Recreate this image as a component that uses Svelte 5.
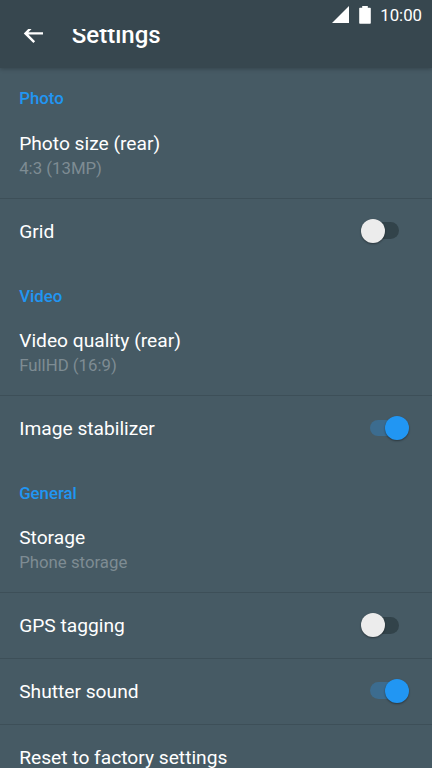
<script>
  let sections = $state([
    { name: 'Photo', rows: [
      { title: 'Photo size (rear)', detail: '4:3 (13MP)' },
      { title: 'Grid', on: false }
    ] },
    { name: 'Video', rows: [
      { title: 'Video quality (rear)', detail: 'FullHD (16:9)' },
      { title: 'Image stabilizer', on: true }
    ] },
    { name: 'General', rows: [
      { title: 'Storage', detail: 'Phone storage' },
      { title: 'GPS tagging', on: false },
      { title: 'Shutter sound', on: true },
      { title: 'Reset to factory settings' }
    ] }
  ]);
</script>

<div class="screen">
  <header>
    <div class="status">
      <svg width="17" height="17" viewBox="0 0 17 17"><path d="M0 17 17 0V17Z" /></svg>
      <svg class="battery" width="12" height="18" viewBox="0 0 12 18"><path d="M3.2 0h5.6v1.8h2.3q.7 0 .7.7v14.6q0 .7-.7.7H.9q-.7 0-.7-.7V2.5q0-.7.7-.7h2.3Z" /></svg>
      <span>10:00</span>
    </div>
    <div class="bar">
      <svg class="back" width="28.8" height="28.8" viewBox="0 0 24 24"><path d="M20 11H7.83l5.59-5.59L12 4l-8 8 8 8 1.41-1.41L7.83 13H20v-2z" /></svg>
      <h1>Settings</h1>
    </div>
  </header>
  <main>
    {#each sections as section}
      <section>
        <h2>{section.name}</h2>
        {#each section.rows as row}
          <div class="row" class:double={row.detail}>
            <div class="label">
              <div class="title">{row.title}</div>
              {#if row.detail}<div class="detail">{row.detail}</div>{/if}
            </div>
            {#if row.on !== undefined}
              <button class="switch" class:on={row.on} role="switch" aria-checked={row.on} aria-label={row.title} onclick={() => (row.on = !row.on)}>
                <span class="thumb"></span>
              </button>
            {/if}
          </div>
        {/each}
      </section>
    {/each}
  </main>
</div>

<style>
  .screen {
    height: 768px;
    overflow: hidden;
    display: flex;
    flex-direction: column;
    background: #465a64;
    color: #fff;
    font-family: Roboto, sans-serif;
  }
  header {
    position: relative;
    z-index: 1;
    flex: none;
    height: 68px;
    background: #37474f;
    box-shadow: 0 1px 4px rgba(0, 0, 0, 0.25);
  }
  svg { fill: #fff; flex: none; }
  .status {
    height: 29px;
    display: flex;
    align-items: center;
    justify-content: flex-end;
    box-sizing: border-box;
    padding: 0 10px 0 0;
    font-size: 16.8px;
  }
  .battery { margin: 0 9.5px 0 9.5px; }
  .bar {
    height: 39px;
    overflow: hidden;
    display: flex;
    align-items: flex-start;
    padding-left: 19px;
  }
  .back { margin-top: -9.8px; }
  h1 {
    margin: -8px 0 0 24px;
    font-size: 24px;
    line-height: 28px;
    font-weight: 500;
  }
  section { padding-bottom: 1.6px; }
  h2 {
    box-sizing: border-box;
    height: 43.6px;
    margin: 0;
    padding: 20.4px 19.2px 0;
    font-size: 16.8px;
    line-height: 20px;
    font-weight: 500;
    color: #2196f3;
  }
  .row {
    box-sizing: border-box;
    height: 65.6px;
    padding: 0 23px 0 19.2px;
    display: flex;
    align-items: center;
    justify-content: space-between;
  }
  .row + .row { border-top: 1px solid #3d4f58; }
  .label { padding-top: 1.4px; }
  .double .label { padding-top: 2.4px; }
  .double { height: 86.4px; }
  .title { font-size: 19.2px; line-height: 24px; }
  .detail { font-size: 16.8px; line-height: 24px; color: #7e8c93; }
  .switch {
    width: 48px;
    height: 24px;
    margin: 0 0 1px;
    padding: 0;
    border: 0;
    background: none;
    display: flex;
    align-items: center;
  }
  .switch::before {
    content: '';
    flex: none;
    width: 28.8px;
    height: 16.8px;
    margin-left: 9.6px;
    border-radius: 8.4px;
    background: #32434a;
  }
  .thumb {
    flex: none;
    width: 24px;
    height: 24px;
    margin-left: -38.4px;
    border-radius: 50%;
    background: #ececec;
    box-shadow: 0 1px 2px rgba(0, 0, 0, 0.4);
  }
  .on::before { margin-left: 9.3px; background: #3c6c8f; }
  .on .thumb { margin-left: -14.4px; background: #2196f3; }
</style>
